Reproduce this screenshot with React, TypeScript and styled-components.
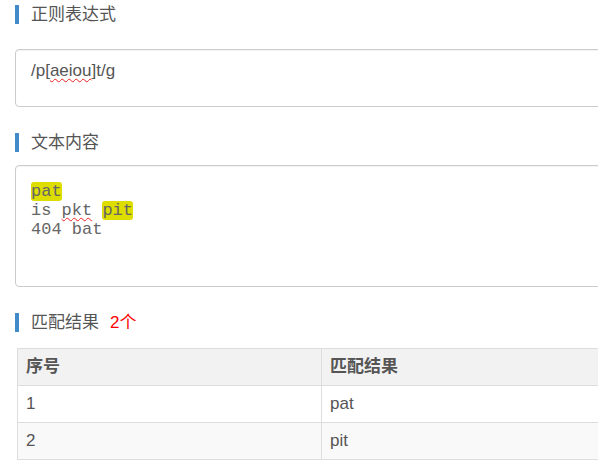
import React from "react";
import styled, { createGlobalStyle } from "styled-components";

const GlobalStyle = createGlobalStyle`
  html, body {
    margin: 0;
    padding: 0;
    background: #fff;
    overflow: hidden;
  }
  body {
    font-family: "Liberation Sans", "Noto Sans CJK SC", sans-serif;
    color: #555;
  }
`;

const Page = styled.div`
  width: 640px;
  padding: 5px 0 0 15px;
`;

const Title = styled.div<{ $gap: number }>`
  display: flex;
  align-items: center;
  height: 19px;
  border-left: 4px solid #428bca;
  padding-left: 12px;
  margin-bottom: ${(p) => p.$gap}px;
  font-size: 17px;
  line-height: 19px;
  color: #555;
`;

const Count = styled.span`
  margin-left: 11px;
  color: #f00;
`;

const Field = styled.div`
  box-sizing: border-box;
  height: 58px;
  padding: 11px 15px;
  border: 1px solid #ccc;
  border-radius: 4px;
  font-size: 17px;
  line-height: 20px;
  color: #555;
  margin-bottom: 26px;
  box-shadow: inset 0 1px 1px rgba(0, 0, 0, 0.05);
`;

const TextArea = styled.div`
  box-sizing: border-box;
  height: 122px;
  padding: 16px 15px;
  border: 1px solid #ccc;
  border-radius: 4px;
  font-family: "Liberation Mono", "Courier New", monospace;
  font-size: 17px;
  line-height: 19px;
  color: #666;
  white-space: pre;
  margin-bottom: 26px;
  box-shadow: inset 0 1px 1px rgba(0, 0, 0, 0.05);
`;

const Misspelt = styled.span`
  text-decoration-line: underline;
  text-decoration-style: wavy;
  text-decoration-color: #e22;
  text-decoration-thickness: 1px;
  text-underline-offset: 2px;
  text-decoration-skip-ink: none;
`;

const Mark = styled.mark`
  background: #dddd00;
  color: inherit;
  border-radius: 3px;
`;

const Table = styled.table`
  width: 609px;
  margin-left: 2px;
  border-collapse: collapse;
  table-layout: fixed;
  font-size: 17px;
  line-height: 20px;
  color: #555;
`;

const Head = styled.th`
  text-align: left;
  font-weight: bold;
  background: #f2f2f2;
  border: 1px solid #ddd;
  padding: 8px 8px;
`;

const Row = styled.tr<{ $odd?: boolean }>`
  background: ${(p) => (p.$odd ? "#f9f9f9" : "#fff")};
`;

const Cell = styled.td`
  border: 1px solid #ddd;
  padding: 8px 8px;
`;

const matches = ["pat", "pit"];

export default function App() {
  return (
    <Page>
      <GlobalStyle />
      <Title $gap={25}>正则表达式</Title>
      <Field>
        /p[<Misspelt>aeiou</Misspelt>]t/g
      </Field>

      <Title $gap={13}>文本内容</Title>
      <TextArea>
        <Mark>pat</Mark>
        {"\nis "}
        <Misspelt>pkt</Misspelt> <Mark>pit</Mark>
        {"\n404 bat"}
      </TextArea>

      <Title $gap={16}>
        匹配结果<Count>2个</Count>
      </Title>
      <Table>
        <thead>
          <tr>
            <Head>序号</Head>
            <Head>匹配结果</Head>
          </tr>
        </thead>
        <tbody>
          {matches.map((m, i) => (
            <Row key={m} $odd={i % 2 === 1}>
              <Cell>{i + 1}</Cell>
              <Cell>{m}</Cell>
            </Row>
          ))}
        </tbody>
      </Table>
    </Page>
  );
}
